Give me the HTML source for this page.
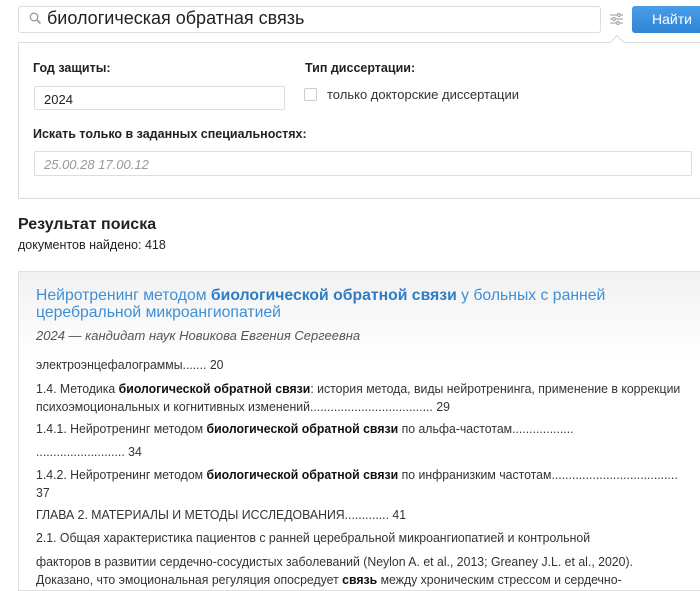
<!DOCTYPE html>
<html><head><meta charset="utf-8"><style>
*{margin:0;padding:0;box-sizing:border-box}
body{width:700px;height:582px;overflow:hidden;background:#fff;font-family:"Liberation Sans","Noto Sans CJK SC",sans-serif;color:#222;position:relative}
.a{position:absolute;white-space:nowrap}
.t{font-size:13px;color:#333;left:36px;transform:scaleX(0.945);transform-origin:0 0}
b{font-weight:bold;color:#111}
.lbl{font-size:12.5px;font-weight:bold;color:#222}
</style></head><body>
<div class="a" style="left:18px;top:6px;width:583px;height:27px;border:1px solid #ddd;border-radius:3px"></div>
<svg class="a" style="left:29px;top:12px" width="13" height="13" viewBox="0 0 13 13"><circle cx="5" cy="5" r="3.8" fill="none" stroke="#999" stroke-width="1.3"/><line x1="7.8" y1="7.8" x2="11.5" y2="11.5" stroke="#999" stroke-width="1.6"/></svg>
<div class="a" style="left:47px;top:8px;font-size:18px;color:#222">биологическая обратная связь</div>
<svg class="a" style="left:609px;top:12px" width="15" height="14" viewBox="0 0 15 14"><g stroke="#aaa" stroke-width="1.2" fill="#fff"><line x1="1" y1="3" x2="14" y2="3"/><line x1="1" y1="7" x2="14" y2="7"/><line x1="1" y1="11" x2="14" y2="11"/><circle cx="10" cy="3" r="1.5"/><circle cx="5" cy="7" r="1.5"/><circle cx="9" cy="11" r="1.5"/></g></svg>
<div class="a" style="left:632px;top:6px;width:70px;height:27px;background:linear-gradient(#4a9de6,#2f85d6);border-radius:3px 0 0 3px;color:#fff;font-size:14px;line-height:27px;padding-left:20px">Найти</div>
<div class="a" style="left:18px;top:42px;width:690px;height:157px;border:1px solid #ddd;border-right:none"></div>
<div class="a" style="left:612px;top:37px;width:10px;height:10px;background:#fff;border-left:1px solid #ddd;border-top:1px solid #ddd;transform:rotate(45deg)"></div>
<div class="a lbl" style="left:33px;top:61px">Год защиты:</div>
<div class="a lbl" style="left:305px;top:61px">Тип диссертации:</div>
<div class="a" style="left:34px;top:86px;width:251px;height:24px;border:1px solid #ddd;border-radius:2px;font-size:13px;padding:5px 0 0 9px">2024</div>
<div class="a" style="left:304px;top:88px;width:13px;height:13px;border:1px solid #ccc;border-radius:2px"></div>
<div class="a" style="left:327px;top:87px;font-size:13px;color:#333">только докторские диссертации</div>
<div class="a lbl" style="left:33px;top:127px">Искать только в заданных специальностях:</div>
<div class="a" style="left:34px;top:151px;width:658px;height:25px;border:1px solid #ddd;border-radius:2px;font-size:13px;font-style:italic;color:#999;padding:5px 0 0 9px">25.00.28 17.00.12</div>
<div class="a" style="left:18px;top:216px;font-size:16px;font-weight:bold;color:#222">Результат поиска</div>
<div class="a" style="left:18px;top:238px;font-size:12.5px;color:#222">документов найдено: 418</div>
<div class="a" style="left:18px;top:271px;width:690px;height:320px;border:1px solid #e0e0e0;border-right:none;background:linear-gradient(#f2f2f2,#fff 90px)"></div>
<div class="a" style="left:36px;top:287px;font-size:16px;color:#3d8fd6;line-height:17px;transform:scaleX(0.985);transform-origin:0 0">Нейротренинг методом <b style="color:#2e7cc4">биологической обратной связи</b> у больных с ранней<br>церебральной микроангиопатией</div>
<div class="a" style="left:36px;top:328px;font-size:13px;font-style:italic;color:#555">2024 — кандидат наук Новикова Евгения Сергеевна</div>
<div class="a t" style="top:357px">электроэнцефалограммы....... 20</div>
<div class="a t" style="top:380px;line-height:18px">1.4. Методика <b>биологической обратной связи</b>: история метода, виды нейротренинга, применение в коррекции<br>психоэмоциональных и когнитивных изменений.................................... 29</div>
<div class="a t" style="top:421px">1.4.1. Нейротренинг методом <b>биологической обратной связи</b> по альфа-частотам..................</div>
<div class="a t" style="top:444px">.......................... 34</div>
<div class="a t" style="top:466px;line-height:18px">1.4.2. Нейротренинг методом <b>биологической обратной связи</b> по инфранизким частотам.....................................<br>37</div>
<div class="a t" style="top:507px">ГЛАВА 2. МАТЕРИАЛЫ И МЕТОДЫ ИССЛЕДОВАНИЯ............. 41</div>
<div class="a t" style="top:530px">2.1. Общая характеристика пациентов с ранней церебральной микроангиопатией и контрольной</div>
<div class="a t" style="top:553px;line-height:18px">факторов в развитии сердечно-сосудистых заболеваний (Neylon A. et al., 2013; Greaney J.L. et al., 2020).<br>Доказано, что эмоциональная регуляция опосредует <b>связь</b> между хроническим стрессом и сердечно-</div>
</body></html>
